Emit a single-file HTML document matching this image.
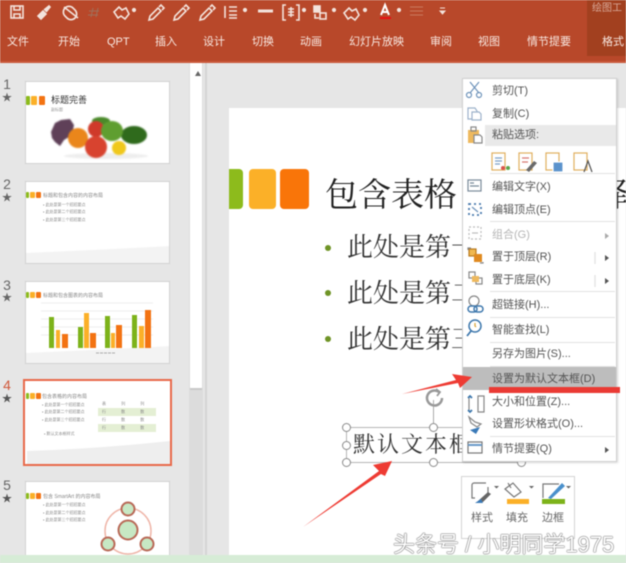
<!DOCTYPE html>
<html lang="zh"><head><meta charset="utf-8"><style>
html,body{margin:0;padding:0}
body{width:626px;height:563px;overflow:hidden;position:relative;background:#e6e6e6;font-family:"Liberation Sans","Noto Sans CJK SC",sans-serif}
#w{position:absolute;left:0;top:0;width:626px;height:563px;overflow:hidden;filter:blur(.6px)}
.a,.t,.m,.n{position:absolute}
.t{white-space:nowrap;color:#f8e8e1;font-size:11px;line-height:14px}
.thumb{position:absolute;left:25px;width:145px;background:#fff;border:1px solid #d2d2d2;box-sizing:border-box;overflow:hidden}
.n{left:0;width:14px;text-align:center;color:#666;font-size:14px;line-height:15px}
.s{position:absolute;left:0;width:14px;text-align:center;color:#666;font-size:10px;line-height:12px}
.sq{position:absolute;border-radius:1px}
.tx{position:absolute;white-space:nowrap;color:#888;font-size:5px;line-height:6px;filter:blur(.3px)}
.m{left:492px;white-space:nowrap;color:#555;font-size:11px;line-height:14px}
.b{position:absolute;white-space:nowrap;font-family:"Liberation Serif","Noto Serif CJK SC",serif;color:#333;font-size:26px;line-height:30px}
.dot{position:absolute;width:6px;height:6px;border-radius:50%;background:#6f9426;left:326px}
.h{position:absolute;width:9px;height:9px;border-radius:50%;background:#fff;border:1.5px solid #8a8a8a;box-sizing:border-box}
.sep{position:absolute;left:490px;width:125px;height:1px;background:#e2e2e2}
</style></head><body><div id="w">

<!-- ribbon -->
<div class="a" style="left:0;top:0;width:626px;height:63px;background:#b8482a"></div>
<div class="a" style="left:0;top:61px;width:626px;height:2px;background:#c9583a"></div>
<div class="a" style="left:587px;top:0;width:39px;height:56px;background:#a2401f"></div>
<svg class="a" style="left:0;top:0" width="470" height="26" fill="none" stroke="#f3e3dc" stroke-width="1.6">
<rect x="11" y="6" width="12" height="12"/><path d="M14 6v4h6V6M14 18v-4h6v4"/>
<path d="M38 16l5-5 3 3-5 5zM44 10l5-4 1 1-4 5" fill="#f3e3dc"/>
<path d="M65 16a5 5 0 0 1 8-8l2 2a5 5 0 0 1-8 8zM64 7l14 11" />
<path d="M93 8l-2 9M98 8l-2 9M89 11h10M88 15h10" stroke="#a0705a" stroke-width="1"/>
<path d="M114 12l5-5 3 3 4-2 3 6-4 5-4-3-3 2z"/><circle cx="134" cy="10" r="1.3" fill="#f3e3dc"/>
<path d="M149 20l1-4 8-8 3 3-8 8zM159 7l2-2 3 3-2 2" /><path d="M174 20l1-4 8-8 3 3-8 8zM184 7l2-2 3 3-2 2"/><path d="M200 20l1-4 8-8 3 3-8 8zM210 7l2-2 3 3-2 2"/>
<path d="M225 6v12M229 7h8M229 11h8M229 15h8M229 18h8"/><circle cx="245" cy="10" r="1.3" fill="#f3e3dc"/>
<path d="M258 11h15" stroke-width="3"/><path d="M286 5h-3v15h3M296 5h3v15h-3M288 9h6M288 12h6M288 15h6M291 7v10"/><circle cx="304" cy="10" r="1.3" fill="#f3e3dc"/>
<rect x="314" y="6" width="6" height="6" fill="#f3e3dc"/><rect x="320" y="13" width="6" height="6"/><path d="M315 14v4h4"/><circle cx="334" cy="10" r="1.3" fill="#f3e3dc"/>
<path d="M344 13l5-5 3 3 4-2 3 6-4 5-4-3-3 2z"/><circle cx="365" cy="10" r="1.3" fill="#f3e3dc"/>
<path d="M381 15l4-10 4 10M382.500 12h5" stroke="#fff" stroke-width="2"/><rect x="380" y="17" width="11" height="2" fill="#e81010" stroke="none"/><circle cx="399" cy="10" r="1.3" fill="#f3e3dc"/>
<path d="M410 7h13M410 11h13M410 15h13" stroke="#c97a60" stroke-width="1"/>
<path d="M440 8h5M440 11h5l-2.500 3z" stroke-width="1" fill="#f3e3dc"/>
</svg>
<div class="t" style="left:592px;top:2px;font-size:10px;color:#d8a898">绘图工</div>
<div class="t" style="left:7px;top:35px">文件</div>
<div class="t" style="left:58px;top:35px">开始</div>
<div class="t" style="left:107px;top:35px">QPT</div>
<div class="t" style="left:155px;top:35px">插入</div>
<div class="t" style="left:203px;top:35px">设计</div>
<div class="t" style="left:252px;top:35px">切换</div>
<div class="t" style="left:300px;top:35px">动画</div>
<div class="t" style="left:349px;top:35px">幻灯片放映</div>
<div class="t" style="left:430px;top:35px">审阅</div>
<div class="t" style="left:478px;top:35px">视图</div>
<div class="t" style="left:527px;top:35px">情节提要</div>
<div class="t" style="left:602px;top:35px">格式</div>

<!-- scrollbar -->
<div class="a" style="left:189px;top:63px;width:14px;height:500px;background:#dcdcdc"></div>
<div class="a" style="left:190px;top:63px;width:12px;height:327px;background:#fff;border-bottom:2px solid #c8c8c8;box-sizing:border-box"></div>
<div class="a" style="left:195px;top:71px;width:0;height:0;border:3.500px solid transparent;border-bottom:5px solid #666;border-top:0"></div>
<div class="a" style="left:205px;top:63px;width:2px;height:500px;background:#d4d4d4"></div>

<!-- thumb numbers -->
<div class="n" style="top:77px">1</div><div class="s" style="top:93px">★</div>
<div class="n" style="top:177px">2</div><div class="s" style="top:193px">★</div>
<div class="n" style="top:278px">3</div><div class="s" style="top:293px">★</div>
<div class="n" style="top:378px;color:#d0583a">4</div><div class="s" style="top:394px;color:#555">★</div>
<div class="n" style="top:478px">5</div><div class="s" style="top:494px;color:#555">★</div>

<!-- slide 1 -->
<div class="thumb" style="top:81px;height:83px">
<div class="sq" style="left:0;top:14px;width:4px;height:9px;background:#8dbb1c"></div><div class="sq" style="left:5px;top:14px;width:6px;height:9px;background:#fbb028"></div><div class="sq" style="left:13px;top:14px;width:6px;height:9px;background:#f37312"></div>
<div class="tx" style="left:25px;top:13px;font-size:9px;line-height:11px;color:#333">标题完善</div>
<div class="tx" style="left:25px;top:25px;font-size:4px;color:#999">副标题</div>
<svg class="a" style="left:0;top:0;filter:blur(.7px)" width="145" height="83">
<ellipse cx="80" cy="74" rx="42" ry="3" fill="#eee"/>
<path d="M25 50l4-9 6-3 9-1 4 6-2 10-8 5-4 6-5-4-3-4z" fill="#5f4058"/>
<ellipse cx="75" cy="39" rx="9" ry="4" fill="#4a8a2a"/>
<ellipse cx="108" cy="53" rx="13" ry="9" fill="#2f6a1c"/>
<circle cx="70" cy="47" r="8" fill="#cf3a2a"/>
<ellipse cx="86" cy="49" rx="11" ry="10" fill="#5f9e30"/>
<circle cx="52" cy="56" r="10" fill="#ea861b"/>
<circle cx="70" cy="65" r="11" fill="#d8432f"/>
<circle cx="93" cy="66" r="7" fill="#f0c81c"/>
</svg></div>

<!-- slide 2 -->
<div class="thumb" style="top:181px;height:83px">
<div class="sq" style="left:0;top:10px;width:3px;height:6px;background:#8dbb1c"></div><div class="sq" style="left:4px;top:10px;width:5px;height:6px;background:#fbb028"></div><div class="sq" style="left:10px;top:10px;width:5px;height:6px;background:#f37312"></div>
<div class="tx" style="left:17px;top:11px">标题和包含内容的内容布局</div>
<div class="tx" style="left:17px;top:20px;font-size:4px">• 此处是第一个招招要点</div>
<div class="tx" style="left:17px;top:27px;font-size:4px">• 此处是第二个招招要点</div>
<div class="tx" style="left:17px;top:35px;font-size:4px">• 此处是第三个招招要点</div>
<svg class="a" style="left:0;top:0" width="145" height="83"><path d="M0 71Q70 68 145 64V83H0z" fill="#f3f3f3"/></svg></div>

<!-- slide 3 -->
<div class="thumb" style="top:281px;height:83px">
<div class="sq" style="left:0;top:10px;width:3px;height:6px;background:#8dbb1c"></div><div class="sq" style="left:4px;top:10px;width:5px;height:6px;background:#fbb028"></div><div class="sq" style="left:10px;top:10px;width:5px;height:6px;background:#f37312"></div>
<div class="tx" style="left:17px;top:11px">标题和包含图表的内容布局</div>
<svg class="a" style="left:0;top:0" width="145" height="83">
<path d="M0 71Q70 68 145 64V83H0z" fill="#f3f3f3"/>
<path d="M15 21h112M15 29h112M15 37h112M15 45h112M15 53h112" stroke="#eee" stroke-width="1"/>
<g fill="#7db31a"><rect x="23" y="35" width="5" height="31"/><rect x="52" y="45" width="5" height="21"/><rect x="79" y="34" width="5" height="32"/><rect x="106" y="33" width="5" height="33"/></g>
<g fill="#fbb028"><rect x="30" y="48" width="4" height="18"/><rect x="58" y="31" width="5" height="35"/><rect x="85" y="51" width="4" height="15"/><rect x="113" y="44" width="5" height="22"/></g>
<g fill="#f37312"><rect x="36" y="52" width="6" height="14"/><rect x="64" y="51" width="6" height="15"/><rect x="90" y="43" width="6" height="23"/><rect x="119" y="28" width="6" height="38"/></g>
<path d="M70 71h20" stroke="#aaa" stroke-width="1" stroke-dasharray="3 1"/></svg></div>

<!-- slide 4 -->
<div class="thumb" style="left:23px;top:379px;width:149px;height:87px;border:2px solid #e8694a">
<div class="sq" style="left:1px;top:12px;width:3px;height:6px;background:#8dbb1c"></div><div class="sq" style="left:5px;top:12px;width:5px;height:6px;background:#fbb028"></div><div class="sq" style="left:11px;top:12px;width:5px;height:6px;background:#f37312"></div>
<div class="tx" style="left:17px;top:13px">包含表格的内容布局</div>
<div class="tx" style="left:17px;top:21px;font-size:4px">• 此处是第一个招招要点</div>
<div class="tx" style="left:17px;top:28px;font-size:4px">• 此处是第二个招招要点</div>
<div class="tx" style="left:17px;top:36px;font-size:4px">• 此处是第三个招招要点</div>
<div class="tx" style="left:19px;top:50px;font-size:4px">• 默认文本框样式</div>
<div class="a" style="left:73px;top:27px;width:58px;height:8px;background:#e4efd4"></div>
<div class="a" style="left:73px;top:43px;width:58px;height:8px;background:#e4efd4"></div>
<div class="tx" style="left:77px;top:20px;font-size:4px;letter-spacing:7px">表 列 列</div>
<div class="tx" style="left:77px;top:28px;font-size:4px;letter-spacing:7px">行 数 数</div>
<div class="tx" style="left:77px;top:36px;font-size:4px;letter-spacing:7px">行 数 数</div>
<div class="tx" style="left:77px;top:44px;font-size:4px;letter-spacing:7px">行 数 数</div>
<svg class="a" style="left:0;top:0" width="145" height="83"><path d="M2 70Q70 68 145 60V83H2z" fill="#eeeeee"/></svg></div>

<!-- slide 5 -->
<div class="thumb" style="top:481px;height:82px">
<div class="sq" style="left:0;top:11px;width:3px;height:6px;background:#8dbb1c"></div><div class="sq" style="left:4px;top:11px;width:5px;height:6px;background:#fbb028"></div><div class="sq" style="left:10px;top:11px;width:5px;height:6px;background:#f37312"></div>
<div class="tx" style="left:17px;top:12px">包含 SmartArt 的内容布局</div>
<div class="tx" style="left:17px;top:20px;font-size:4px">• 此处是第一个招招要点</div>
<div class="tx" style="left:17px;top:28px;font-size:4px">• 此处是第二个招招要点</div>
<div class="tx" style="left:17px;top:35px;font-size:4px">• 此处是第三个招招要点</div>
<svg class="a" style="left:0;top:0" width="145" height="83">
<circle cx="102" cy="49" r="23" fill="none" stroke="#efb5a8" stroke-width="1.500"/>
<g fill="#c7e8c4" stroke="#b96a58" stroke-width="2"><circle cx="102" cy="48" r="9.500"/><circle cx="102" cy="27" r="6.500"/><circle cx="82" cy="62" r="6.500"/><circle cx="121" cy="62" r="6.500"/></g></svg></div>

<!-- main slide -->
<div class="a" style="left:229px;top:108px;width:397px;height:455px;background:#fff"></div>
<div class="a" style="left:229px;top:169px;width:14px;height:40px;background:#8dbb1c;border-radius:0 4px 4px 0"></div>
<div class="a" style="left:249px;top:169px;width:27px;height:40px;background:#fbb028;border-radius:4px"></div>
<div class="a" style="left:280px;top:169px;width:29px;height:40px;background:#f97509;border-radius:4px"></div>
<div class="b" style="left:325px;top:177px;font-size:33px;line-height:38px;color:#222">包含表格</div>
<div class="b" style="left:596px;top:177px;font-size:33px;line-height:38px;color:#222">择</div>
<div class="dot" style="left:325px;top:245px"></div><div class="b" style="left:347px;top:233px">此处是第一个要点</div>
<div class="dot" style="left:325px;top:290px"></div><div class="b" style="left:347px;top:279px">此处是第二个要点</div>
<div class="dot" style="left:325px;top:336px"></div><div class="b" style="left:347px;top:325px">此处是第三个要点</div>

<!-- textbox -->
<div class="a" style="left:346px;top:427px;width:175px;height:36px;border:1px solid #b5b5b5;box-sizing:border-box"></div>
<div class="a" style="left:433px;top:400px;width:1px;height:28px;background:#aaa"></div>
<div class="b" style="left:353px;top:430px;font-size:22px;letter-spacing:2px;color:#333">默认文本框</div>
<div class="h" style="left:342px;top:423px"></div><div class="h" style="left:429px;top:423px"></div>
<div class="h" style="left:342px;top:441px"></div><div class="h" style="left:342px;top:458px"></div><div class="h" style="left:429px;top:458px"></div><div class="h" style="left:517px;top:458px"></div>
<svg class="a" style="left:424px;top:387px" width="22" height="22" fill="none" stroke="#999" stroke-width="2.500"><path d="M15 5a7.500 7.500 0 1 0 3 6"/><path d="M12 2l4 3-3 4" stroke-width="1.800"/></svg>

<!-- menu -->
<div class="a" style="left:462px;top:78px;width:155px;height:384px;background:#fff;border:1px solid #d0d0d0;box-sizing:border-box;box-shadow:1px 1px 2px rgba(0,0,0,.15)"></div>
<div class="a" style="left:485px;top:125px;width:131px;height:21px;background:#e9e9e9"></div>
<div class="a" style="left:463px;top:367px;width:153px;height:23px;background:#bdbdbd"></div>
<div class="sep" style="top:173px"></div><div class="sep" style="top:221px"></div><div class="sep" style="top:291px"></div><div class="sep" style="top:317px"></div><div class="sep" style="top:342px"></div><div class="sep" style="top:366px"></div><div class="sep" style="top:436px"></div>
<div class="m" style="top:84px">剪切(T)</div>
<div class="m" style="top:107px">复制(C)</div>
<div class="m" style="top:128px">粘贴选项:</div>
<div class="m" style="top:180px">编辑文字(X)</div>
<div class="m" style="top:203px">编辑顶点(E)</div>
<div class="m" style="top:228px;color:#b5b5b5">组合(G)</div>
<div class="m" style="top:250px">置于顶层(R)</div>
<div class="m" style="top:273px">置于底层(K)</div>
<div class="m" style="top:298px">超链接(H)...</div>
<div class="m" style="top:323px">智能查找(L)</div>
<div class="m" style="top:347px">另存为图片(S)...</div>
<div class="m" style="top:372px">设置为默认文本框(D)</div>
<div class="m" style="top:395px">大小和位置(Z)...</div>
<div class="m" style="top:417px">设置形状格式(O)...</div>
<div class="m" style="top:442px">情节提要(Q)</div>
<svg class="a" style="left:462px;top:78px" width="164" height="384" fill="none" stroke="#6f94bb" stroke-width="1.200">
<path d="M8 4l9 11M17 4L8 15"/><circle cx="7" cy="17" r="2.500"/><circle cx="17" cy="17" r="2.500"/>
<path d="M6 30h7l2 3v8H6z" stroke="#9db2cb"/><path d="M10 34h7l2 2v6h-9z" stroke="#9db2cb" fill="#fff"/>
<rect x="6" y="52" width="11" height="13" fill="#eeb95e" stroke="none"/><rect x="9" y="49" width="5" height="4" stroke="#888"/><path d="M12 57h6l2 2v6h-8z" fill="#fff" stroke="#888"/>
<g stroke="#e0b060"><rect x="30" y="75" width="13" height="17" fill="#fff"/><rect x="57" y="75" width="13" height="17" fill="#fff"/><rect x="84" y="75" width="13" height="17" fill="#fff"/><rect x="112" y="75" width="13" height="17" fill="#fff"/></g>
<path d="M33 80h7M33 83h7M33 86h5" stroke="#7da2c8"/><circle cx="41" cy="90" r="2" fill="#d9534f" stroke="none"/><circle cx="46" cy="90" r="2" fill="#5ba54b" stroke="none"/>
<path d="M60 80h7M60 84h6" stroke="#d87a70"/><path d="M64 92l8-9 3 2-8 9z" fill="#6a6a6a" stroke="none"/>
<rect x="91" y="84" width="10" height="10" fill="#5b93cc" stroke="#fff"/>
<path d="M122 94l4-11 4 11" stroke="#555"/>
<rect x="6" y="102" width="13" height="11" stroke="#7a8a99"/><path d="M8 105h4M8 108h9" stroke="#7a8a99"/>
<rect x="7" y="126" width="12" height="11" stroke-dasharray="2 3" stroke="#4a7aad" stroke-width="1.800"/><path d="M10 129l6 5" />
<g stroke="#bbb"><rect x="7" y="149" width="12" height="12" stroke-dasharray="2 2"/><path d="M10 155h6"/></g>
<rect x="7" y="171" width="7" height="7" fill="#f0b850" stroke="#b87a20"/><rect x="12" y="176" width="8" height="8" fill="#e08a20" stroke="none"/><path d="M6 172v-2h3M21 184v1h-3" stroke="#888"/>
<rect x="7" y="194" width="6" height="6" stroke="#888"/><rect x="14" y="200" width="6" height="6" stroke="#888"/><rect x="10" y="198" width="7" height="6" fill="#eeb95e" stroke="none"/>
<circle cx="12" cy="223" r="5" stroke="#888"/><path d="M6 231a3 3 0 0 1 3-3h3a3 3 0 0 1 0 6H9a3 3 0 0 1-3-3zM12 231a3 3 0 0 1 3-3h3a3 3 0 0 1 0 6h-3a3 3 0 0 1-3-3z" stroke="#3e78ad" stroke-width="1.500"/>
<circle cx="13" cy="248" r="6" stroke="#3e78ad" stroke-width="1.500"/><path d="M9 253l-4 5" stroke="#3e78ad" stroke-width="1.800"/><path d="M13 245v3l1 1" stroke="#d8a030"/>
<path d="M7 318v16M16 318h6v16h-6z" stroke="#888"/><path d="M6 320l2-2 2 2M6 332l2 2 2-2" stroke="#3e78ad" stroke-width="1.800"/>
<path d="M7 339l6 5 6 2-4 3-6-4z" stroke="#888"/><path d="M8 352l10-3-4 7z" fill="#3a7ab8" stroke="none"/>
<rect x="6" y="364" width="14" height="11" stroke="#777"/><path d="M6 367h14" stroke="#6a9ac8" stroke-width="2"/>
<path d="M143 155l4 3-4 3z" fill="#aaa" stroke="none"/><path d="M143 177l4 3-4 3z" fill="#555" stroke="none"/><path d="M143 200l4 3-4 3z" fill="#555" stroke="none"/><path d="M143 369l4 3-4 3z" fill="#555" stroke="none"/>
<path d="M133 174v12M133 197v12" stroke="#e0e0e0"/>
</svg>

<!-- mini toolbar -->
<div class="a" style="left:461px;top:476px;width:114px;height:63px;background:#fff;border:1px solid #d4d4d4;box-sizing:border-box"></div>
<svg class="a" style="left:461px;top:476px" width="114" height="40" fill="none" stroke="#777" stroke-width="1.200">
<path d="M25 7h-12a2 2 0 0 0-2 2v13h3"/><path d="M27 11v6"/><path d="M17 25l10-9 3 2-8 8z" fill="#666" stroke="none"/><path d="M14 27l6-4 2 4z" fill="#3a7ab8" stroke="none"/>
<path d="M44 13l8-6 8 9-7 5z"/><path d="M47 7l3 5"/><rect x="46" y="23" width="22" height="5" fill="#fbb028" stroke="none"/>
<path d="M82 22V8h16"/><path d="M87 22l14-15 3 3-14 13z" fill="#4a90cc" stroke="none"/><rect x="81" y="23" width="23" height="5" fill="#7db31a" stroke="none"/>
<path d="M33 10h5l-2.500 2.500zM68 10h5l-2.500 2.500zM105 10h5l-2.500 2.500z" fill="#666" stroke="none"/>
</svg>
<div class="m" style="left:471px;top:511px;color:#666">样式</div>
<div class="m" style="left:506px;top:511px;color:#666">填充</div>
<div class="m" style="left:542px;top:511px;color:#666">边框</div>

<!-- bottom strip -->
<div class="a" style="left:0;top:555px;width:626px;height:8px;background:#d6ecd6"></div>

<!-- red annotations -->
<div class="a" style="left:489px;top:387px;width:131px;height:6px;background:#ea3a34"></div>
<svg class="a" style="left:0;top:0" width="626" height="563" fill="#ee3b33">
<path d="M402 394L456 380L452 374L472 377L460 388L458 383Z"/>
<path d="M303 527L379 471L373 465L392 461L385 476L381 474Z"/>
</svg>

<!-- watermark -->
<div class="a" style="left:393px;top:531px;white-space:nowrap;font-size:22px;line-height:27px;color:#fff;text-shadow:0 0 1px #555,0 0 1px #555,0 0 1px #555">头条号 / 小明同学1975</div>
</div></body></html>
